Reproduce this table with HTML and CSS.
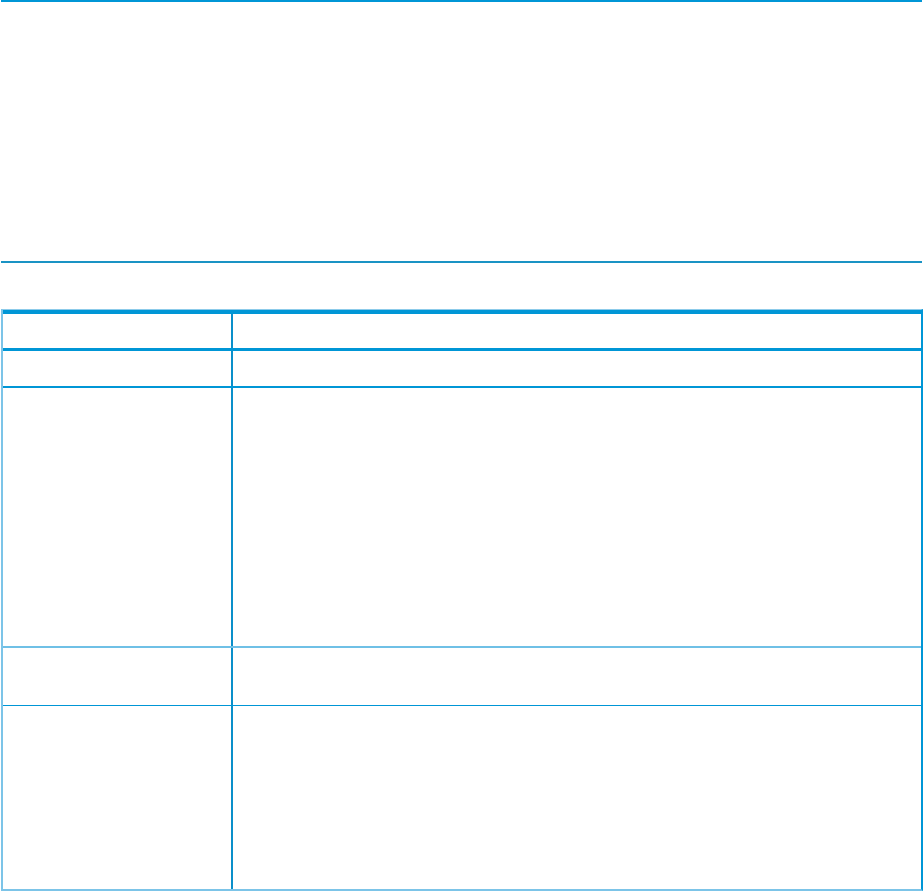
FILE: index.html
```html
<!DOCTYPE html>
<html lang="en">
<head>
<meta charset="utf-8">
<title>Table</title>
<link rel="stylesheet" href="styles.css">
</head>
<body>
<div class="page">
  <div class="banner"></div>
  <div class="table">
    <div class="row head"><div class="cell key"></div><div class="cell val"></div></div>
    <div class="row r1"><div class="cell key"></div><div class="cell val"></div></div>
    <div class="row r2"><div class="cell key"></div><div class="cell val"></div></div>
    <div class="row r3"><div class="cell key"></div><div class="cell val"></div></div>
    <div class="row r4"><div class="cell key"></div><div class="cell val"></div></div>
  </div>
</div>
</body>
</html>
```

FILE: styles.css
```css
html, body {
  margin: 0;
  padding: 0;
  background: #ffffff;
  font-family: "Liberation Sans", Arial, sans-serif;
}
.page {
  padding-left: 1px;
  width: 922px;
}
.banner {
  width: 921px;
  height: 259px;
  border-top: 2px solid #0096d6;
  border-bottom: 2px solid #1a93c4;
  margin-bottom: 46px;
}
.table {
  width: 918px;
  border-top: 1px solid #8ccbea;
  border-left: 2px solid #7cc4e8;
  border-right: 2px solid #0096d6;
  border-bottom: 2px solid #7cc4e8;
}
.row {
  display: grid;
  grid-template-columns: 230px 1fr;
}
.cell.key {
  border-right: 2px solid #0a8fca;
}
.head {
  border-top: 4px solid #0096d6;
  height: 34px;
  border-bottom: 3px solid #0096d6;
}
.r1 {
  height: 35px;
  border-bottom: 2px solid #0096d6;
}
.r2 {
  height: 258px;
  border-bottom: 2px solid #6fc0e6;
}
.r3 {
  height: 57px;
  border-bottom: 1px solid #0096d6;
}
.r4 {
  height: 183px;
}
```
